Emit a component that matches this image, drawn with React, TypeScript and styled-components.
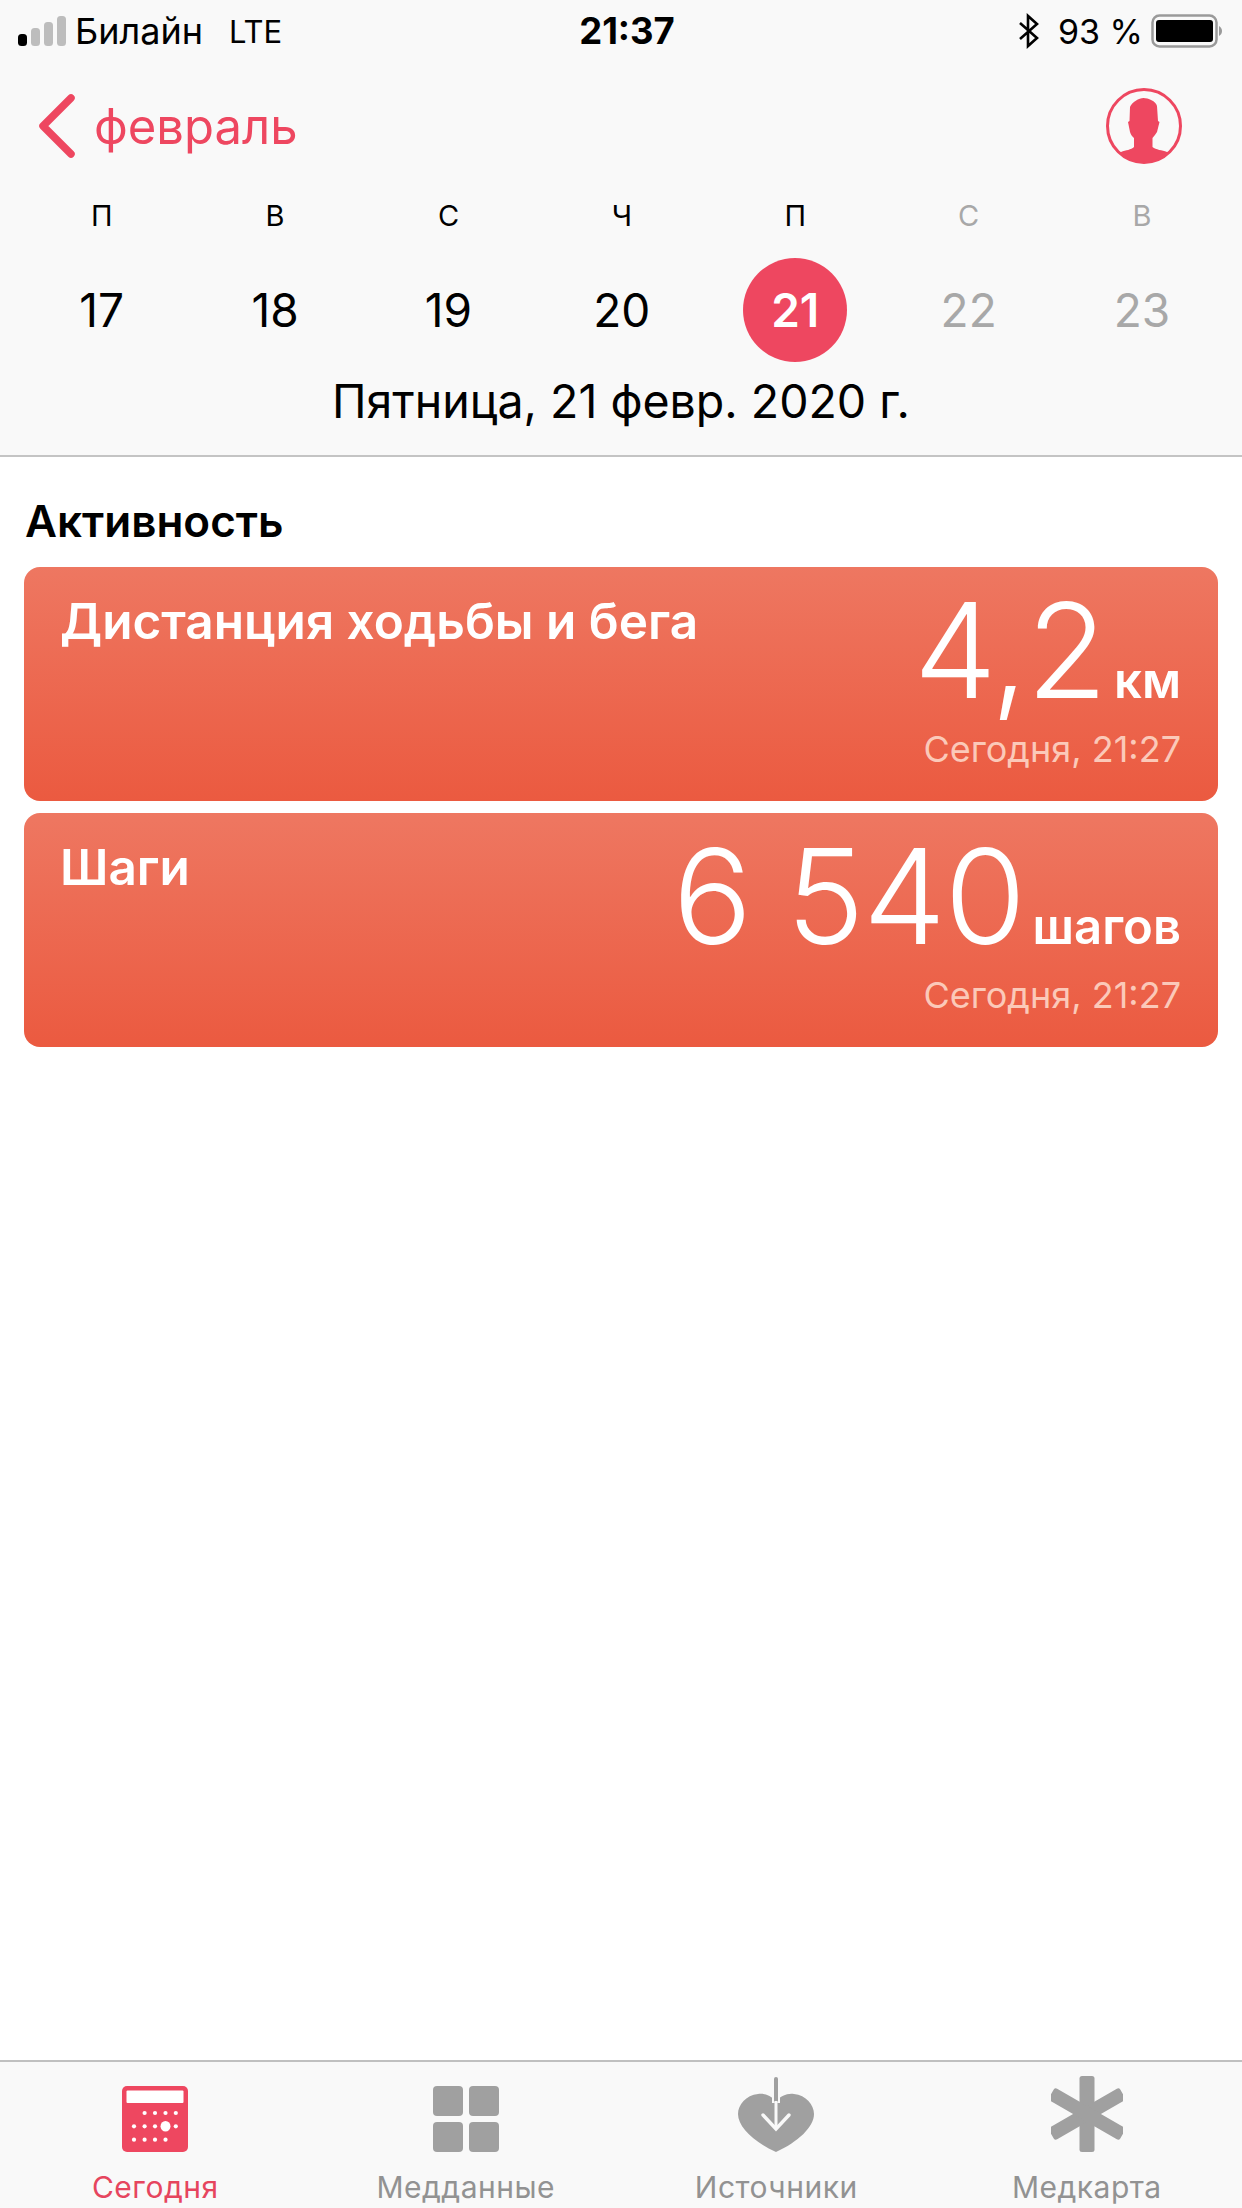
import React from 'react';
import styled, { createGlobalStyle } from 'styled-components';

const Global = createGlobalStyle`
  html, body { margin: 0; padding: 0; background: #fff; }
  body { font-family: Inter, "Noto Sans", "Liberation Sans", sans-serif; }
`;

const Page = styled.div`
  width: 1242px;
  height: 2208px;
  display: flex;
  flex-direction: column;
  overflow: hidden;
  background: #fff;
`;

const Header = styled.header`
  height: 457px;
  box-sizing: border-box;
  background: #f9f9f9;
  border-bottom: 2px solid #c4c4c4;
  display: flex;
  flex-direction: column;
`;

const StatusBar = styled.div`
  height: 62px;
  box-sizing: border-box;
  padding: 0 20px 0 18px;
  display: grid;
  grid-template-columns: 1fr auto 1fr;
  align-items: center;
  color: #000;
  font-size: 34px;
`;

const StatusLeft = styled.div`
  display: flex;
  align-items: center;
  gap: 9px;
`;

const Carrier = styled.span`
  font-size: 36px;
  margin-right: 17px;
`;

const NetworkType = styled.span`
  font-size: 31px;
`;

const Clock = styled.div`
  font-weight: 700;
  font-size: 36.5px;
  margin-left: 14px;
`;

const StatusRight = styled.div`
  display: flex;
  align-items: center;
  justify-content: flex-end;
  gap: 8px;
`;

const NavBar = styled.div`
  height: 128px;
  box-sizing: border-box;
  padding: 0 60px 0 38px;
  display: flex;
  align-items: center;
  justify-content: space-between;
`;

const BackLink = styled.div`
  display: flex;
  align-items: center;
  gap: 18px;
  color: #ee4760;
  font-size: 49px;
`;

const Week = styled.div`
  display: grid;
  grid-template-columns: repeat(7, 173.4px);
  padding: 3px 14px 0 15px;
  justify-items: center;
  align-items: center;
`;

const DayLetter = styled.div<{ $off?: boolean }>`
  height: 46px;
  line-height: 46px;
  font-size: 29px;
  color: ${p => (p.$off ? '#a8a8a8' : '#000')};
`;

const DayNumber = styled.div<{ $off?: boolean; $today?: boolean }>`
  width: 104px;
  height: 104px;
  margin-top: 19px;
  border-radius: 50%;
  display: flex;
  align-items: center;
  justify-content: center;
  font-size: 46px;
  font-weight: ${p => (p.$today ? 600 : 400)};
  color: ${p => (p.$today ? '#fff' : p.$off ? '#a8a8a8' : '#000')};
  background: ${p => (p.$today ? '#ee4760' : 'transparent')};
`;

const DateLine = styled.div`
  text-align: center;
  font-size: 46.5px;
  line-height: 60px;
  margin-top: 9px;
  color: #000;
`;

const Content = styled.main`
  flex: 1;
  padding: 0 24px;
  display: flex;
  flex-direction: column;
`;

const SectionTitle = styled.h2`
  margin: 0;
  height: 110px;
  box-sizing: border-box;
  padding: 39px 1px 0 1px;
  font-size: 44px;
  line-height: 50px;
  font-weight: 600;
  color: #000;
`;

const Card = styled.section`
  height: 234px;
  box-sizing: border-box;
  margin-bottom: 12px;
  padding: 26px 37px 30px 36px;
  border-radius: 16px;
  background: linear-gradient(180deg, #ee7761 0%, #eb5a40 100%);
  color: #fff;
  display: flex;
  justify-content: space-between;
`;

const CardTitle = styled.div`
  font-size: 49.5px;
  line-height: 56px;
  font-weight: 600;
`;

const CardRight = styled.div`
  display: flex;
  flex-direction: column;
  align-items: flex-end;
  margin-top: -7px;
`;

const Value = styled.div`
  display: flex;
  align-items: baseline;
  gap: 8px;
  height: 128px;
`;

const Number_ = styled.span`
  font-size: 132px;
  line-height: 128px;
  font-weight: 260;
  letter-spacing: -1.5px;
`;

const Unit = styled.span`
  font-size: 49px;
  font-weight: 600;
`;

const Stamp = styled.div`
  margin-top: 15px;
  font-size: 36px;
  line-height: 40px;
  color: #fbc9b9;
`;

const TabBar = styled.nav`
  height: 148px;
  box-sizing: border-box;
  background: #f9f9f9;
  border-top: 2px solid #c0c0c0;
  display: grid;
  grid-template-columns: repeat(4, 1fr);
  overflow: hidden;
`;

const Tab = styled.div<{ $active?: boolean }>`
  display: flex;
  flex-direction: column;
  align-items: center;
  color: ${p => (p.$active ? '#e6455e' : '#929292')};
`;

const TabIcon = styled.div`
  height: 90px;
  display: flex;
  align-items: flex-end;
  justify-content: center;
`;

const TabLabel = styled.div`
  font-size: 30px;
  line-height: 44px;
  margin-top: 13px;
  letter-spacing: 0.5px;
  white-space: nowrap;
`;

const Signal = () => (
  <svg width="48" height="30" viewBox="0 0 48 30">
    <rect x="0" y="18" width="9" height="12" rx="3.5" fill="#000" />
    <rect x="13" y="12" width="9" height="18" rx="3.5" fill="#bdbdbd" />
    <rect x="26" y="6" width="9" height="24" rx="3.5" fill="#bdbdbd" />
    <rect x="39" y="0" width="9" height="30" rx="3.5" fill="#bdbdbd" />
  </svg>
);

const Bluetooth = () => (
  <svg width="22" height="36" viewBox="0 0 22 36" style={{ marginRight: 10 }}>
    <path d="M2 10 L19 25 L10 33 V3 L19 11 L2 26" fill="none" stroke="#000" strokeWidth="2.6" />
  </svg>
);

const Battery = () => (
  <svg width="71" height="34" viewBox="0 0 71 34">
    <rect x="1.5" y="1.5" width="64" height="31" rx="7" fill="none" stroke="#9a9a9a" strokeWidth="2.5" />
    <rect x="5" y="6" width="57" height="22" rx="3" fill="#000" />
    <path d="M68 12 C70 13 71 15 71 17 C71 19 70 21 68 22 Z" fill="#9a9a9a" />
  </svg>
);

const Chevron = () => (
  <svg width="38" height="64" viewBox="0 0 38 64">
    <path d="M33 4 L5 32 L33 60" fill="none" stroke="#ee4760" strokeWidth="7.5" strokeLinecap="round" strokeLinejoin="round" />
  </svg>
);

const Profile = () => (
  <svg width="76" height="76" viewBox="0 0 76 76">
    <defs>
      <clipPath id="profile-clip"><circle cx="38" cy="38" r="36" /></clipPath>
    </defs>
    <circle cx="38" cy="38" r="36.5" fill="none" stroke="#ee4760" strokeWidth="3" />
    <path
      clipPath="url(#profile-clip)"
      d="M37.5 10 C42 10 50 13 51 18 L52 33 L53.5 34 L51 44 C49 47 48 48 46.5 50 L46.5 59 C50 62 56 62 61 64 L64 76 L12 76 L15 64 C20 62 25 62 28 59 L28 50 C26 48 25 47 24 44 L22 34 L23.5 33 L24 19 C26 14 33 10 37.5 10 Z"
      fill="#ee4760"
    />
  </svg>
);

const dots: [number, number][] = [
  [22.6, 27], [33, 27], [43.5, 27], [53.8, 27],
  [12, 40.3], [22.6, 40.3], [33, 40.3], [53.8, 40.3],
  [12, 53.7], [22.6, 53.7], [33, 53.7], [43.5, 53.7],
];

const CalendarIcon = () => (
  <svg width="66" height="66" viewBox="0 0 66 66">
    <rect width="66" height="66" rx="5" fill="#ee4760" />
    <rect x="4.5" y="4.5" width="57" height="12.5" fill="#fff" rx="1" />
    {dots.map(([x, y]) => (
      <circle key={`${x}-${y}`} cx={x} cy={y} r="2.1" fill="#fff" />
    ))}
    <ellipse cx="43.5" cy="40.3" rx="5" ry="5.2" fill="#fff" />
  </svg>
);

const GridIcon = () => (
  <svg width="66" height="66" viewBox="0 0 66 66">
    <rect x="0" y="0" width="30" height="30" rx="4" fill="#a0a0a0" />
    <rect x="36" y="0" width="30" height="30" rx="4" fill="#a0a0a0" />
    <rect x="0" y="36" width="30" height="30" rx="4" fill="#a0a0a0" />
    <rect x="36" y="36" width="30" height="30" rx="4" fill="#a0a0a0" />
  </svg>
);

const HeartIcon = () => (
  <svg width="76" height="75" viewBox="0 0 76 75">
    <path
      d="M38 24 C33 19 27 16 20 17 C8 18 0 28 0 37 C0 50 16 65 38 75 C60 65 76 50 76 37 C76 28 68 18 56 17 C49 16 43 19 38 24 Z"
      fill="#a0a0a0"
    />
    <path d="M38 2 V26" stroke="#f9f9f9" strokeWidth="8" fill="none" />
    <path d="M38 2 V24" stroke="#a0a0a0" strokeWidth="4" strokeLinecap="round" fill="none" />
    <path d="M38 24 V52" stroke="#f9f9f9" strokeWidth="3" fill="none" />
    <path d="M25 38 L38 52 L51 38" stroke="#f9f9f9" strokeWidth="3.4" strokeLinecap="round" fill="none" />
  </svg>
);

const StarIcon = () => (
  <svg width="72" height="76" viewBox="0 0 72 76">
    <rect x="28.5" y="0" width="15" height="76" rx="2.5" fill="#a0a0a0" />
    <rect x="29" y="-3" width="14" height="82" rx="2.5" fill="#a0a0a0" transform="rotate(60 36 38)" />
    <rect x="29" y="-3" width="14" height="82" rx="2.5" fill="#a0a0a0" transform="rotate(-60 36 38)" />
  </svg>
);

const days = [
  { l: 'П', n: 17 },
  { l: 'В', n: 18 },
  { l: 'С', n: 19 },
  { l: 'Ч', n: 20 },
  { l: 'П', n: 21, today: true },
  { l: 'С', n: 22, off: true },
  { l: 'В', n: 23, off: true },
];

const cards = [
  { title: 'Дистанция ходьбы и бега', value: '4,2', unit: 'км' },
  { title: 'Шаги', value: '6 540', unit: 'шагов' },
];

const tabs = [
  { label: 'Сегодня', icon: <CalendarIcon />, active: true },
  { label: 'Медданные', icon: <GridIcon /> },
  { label: 'Источники', icon: <HeartIcon /> },
  { label: 'Медкарта', icon: <StarIcon /> },
];

export default function App() {
  return (
    <Page>
      <Global />
      <Header>
        <StatusBar>
          <StatusLeft>
            <Signal />
            <Carrier>Билайн</Carrier>
            <NetworkType>LTE</NetworkType>
          </StatusLeft>
          <Clock>21:37</Clock>
          <StatusRight>
            <Bluetooth />
            <span>93 %</span>
            <Battery />
          </StatusRight>
        </StatusBar>
        <NavBar>
          <BackLink>
            <Chevron />
            <span>февраль</span>
          </BackLink>
          <Profile />
        </NavBar>
        <Week>
          {days.map((d, i) => (
            <DayLetter key={i} $off={d.off}>{d.l}</DayLetter>
          ))}
          {days.map(d => (
            <DayNumber key={d.n} $off={d.off} $today={d.today}>{d.n}</DayNumber>
          ))}
        </Week>
        <DateLine>Пятница, 21 февр. 2020 г.</DateLine>
      </Header>
      <Content>
        <SectionTitle>Активность</SectionTitle>
        {cards.map(c => (
          <Card key={c.title}>
            <CardTitle>{c.title}</CardTitle>
            <CardRight>
              <Value>
                <Number_>{c.value}</Number_>
                <Unit>{c.unit}</Unit>
              </Value>
              <Stamp>Сегодня, 21:27</Stamp>
            </CardRight>
          </Card>
        ))}
      </Content>
      <TabBar>
        {tabs.map(t => (
          <Tab key={t.label} $active={t.active}>
            <TabIcon>{t.icon}</TabIcon>
            <TabLabel>{t.label}</TabLabel>
          </Tab>
        ))}
      </TabBar>
    </Page>
  );
}
